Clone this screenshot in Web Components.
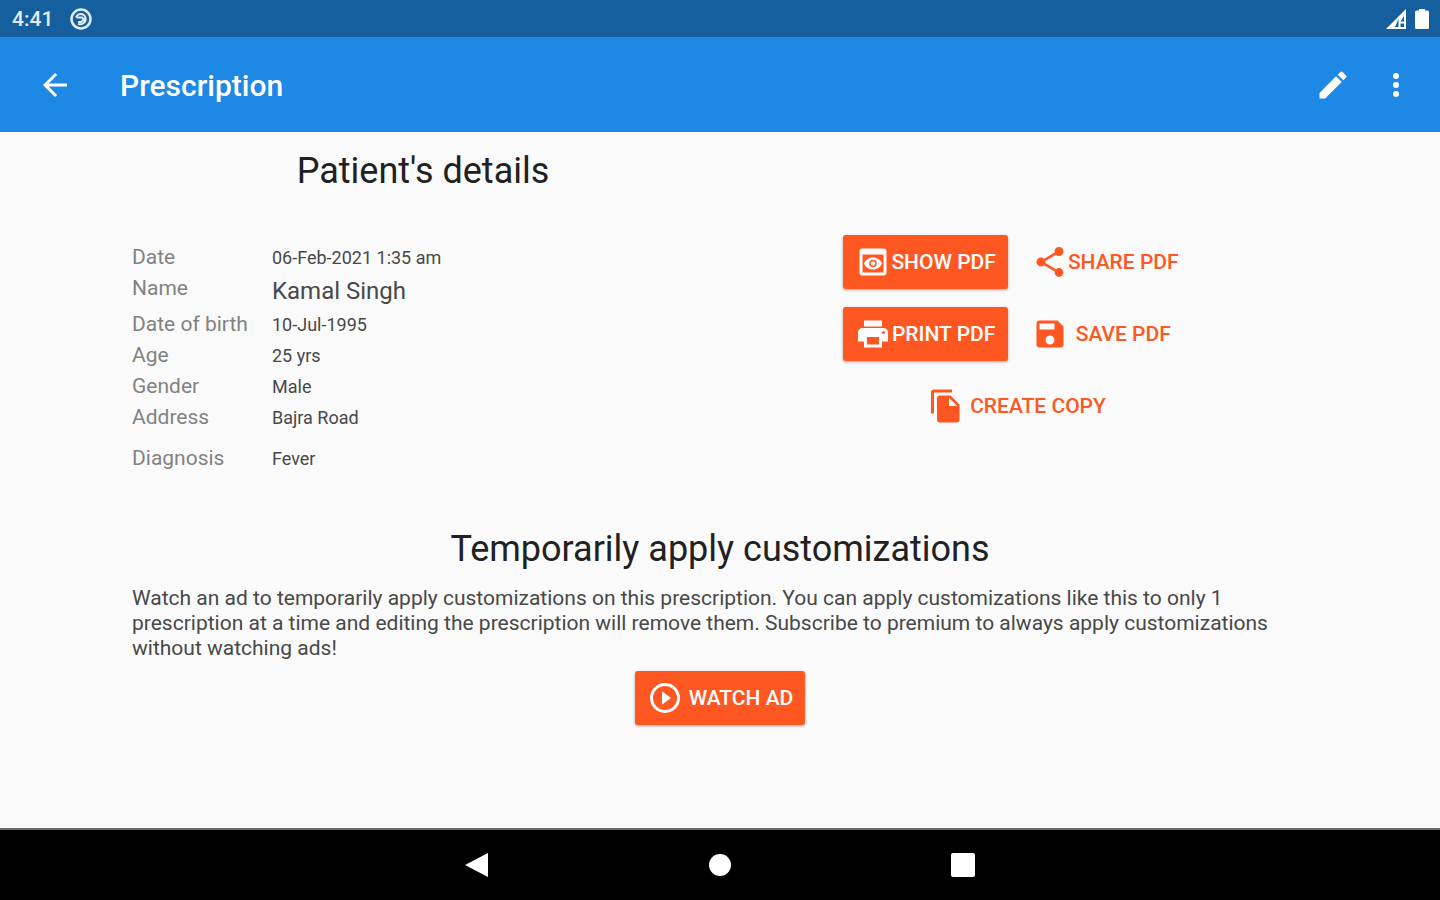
<!DOCTYPE html>
<html lang="en">
<head>
  <meta charset="utf-8" />
  <meta name="viewport" content="width=device-width, initial-scale=1" />
  <title>Prescription</title>
  <style>
    body {
      margin: 0;
      font-family: Roboto, sans-serif;
    }
  </style>
</head>
<body>
  <prescription-screen></prescription-screen>

  <script>
    const ICONS = {
      back: '<path d="M20 11H7.83l5.59-5.59L12 4l-8 8 8 8 1.41-1.41L7.83 13H20z"/>',
      edit: '<path d="M3 17.25V21h3.75L17.81 9.94l-3.75-3.75zM20.71 7.04a1 1 0 0 0 0-1.41l-2.34-2.34a1 1 0 0 0-1.41 0l-1.83 1.83 3.75 3.75z"/>',
      more: '<path d="M12 8a2 2 0 1 0 0-4 2 2 0 0 0 0 4zm0 2a2 2 0 1 0 0 4 2 2 0 0 0 0-4zm0 6a2 2 0 1 0 0 4 2 2 0 0 0 0-4z"/>',
      preview: '<path d="M19 3H5a2 2 0 0 0-2 2v14a2 2 0 0 0 2 2h14a2 2 0 0 0 2-2V5a2 2 0 0 0-2-2zm0 16H5V7h14zm-5.5-6a1.5 1.5 0 1 1-3 0 1.5 1.5 0 0 1 3 0zM12 9c-2.73 0-5.06 1.66-6 4 .94 2.34 3.27 4 6 4s5.06-1.66 6-4c-.94-2.34-3.27-4-6-4zm0 6.5a2.5 2.5 0 1 1 0-5 2.5 2.5 0 0 1 0 5z"/>',
      print: '<path d="M19 8H5a3 3 0 0 0-3 3v6h4v4h12v-4h4v-6a3 3 0 0 0-3-3zm-3 11H8v-5h8zm3-7a1 1 0 1 1 0-2 1 1 0 0 1 0 2zm-1-9H6v4h12z"/>',
      share: '<path d="M18 16.08c-.76 0-1.44.3-1.96.77L8.91 12.7c.05-.23.09-.46.09-.7s-.04-.47-.09-.7l7.05-4.11c.54.5 1.25.81 2.04.81a3 3 0 1 0-3-3c0 .24.04.47.09.7L8.04 9.81A3 3 0 1 0 6 15c.79 0 1.5-.31 2.04-.81l7.12 4.16c-.05.21-.08.43-.08.65a2.92 2.92 0 1 0 2.92-2.92z"/>',
      save: '<path d="M17 3H5a2 2 0 0 0-2 2v14a2 2 0 0 0 2 2h14a2 2 0 0 0 2-2V7zm-5 16a3 3 0 1 1 0-6 3 3 0 0 1 0 6zm3-10H5V5h10z"/>',
      copy: '<path d="M16 1H4a2 2 0 0 0-2 2v14h2V3h12zm-1 4 6 6v10a2 2 0 0 1-2 2H8a2 2 0 0 1-2-2V7a2 2 0 0 1 2-2zm-1 7h5.5L14 6.5z"/>',
      play: '<path d="M10 16.5l6-4.5-6-4.5zM12 2a10 10 0 1 0 0 20 10 10 0 0 0 0-20zm0 18a8 8 0 1 1 0-16 8 8 0 0 1 0 16z"/>',
      badge: '<g fill="none" stroke="currentColor"><circle cx="12" cy="12" r="9.5" stroke-width="2.5"/><path d="M7 10.500c1-3 4-4.500 7-3 3.500 2 3.500 7 0 9-1.500 1-3.500 1-5 .3M8 10.500h5l2 2-3 2.500H9" stroke-width="2"/></g>',
      signal: '<path fill-rule="evenodd" d="M2 22 22 2v20zM11 20h3.500v-8zM16.500 20h3.500v-3.500h-3.500zM16.500 14.500h3.500V9z"/>',
      battery: '<path d="M9 2h6v1.500h2.500a1.500 1.500 0 0 1 1.500 1.500v15.500a1.500 1.500 0 0 1-1.500 1.500h-11A1.500 1.500 0 0 1 5 20.500V5a1.500 1.500 0 0 1 1.500-1.500H9z"/>',
      navBack: '<path d="M0 12 23 0v24z"/>',
      navHome: '<circle cx="12" cy="12" r="11"/>',
      navRecent: '<rect width="24" height="24" rx="2"/>',
    };

    class UiIcon extends HTMLElement {
      constructor() {
        super();
        this.attachShadow({ mode: "open" });
      }

      connectedCallback() {
        this.shadowRoot.innerHTML = /* html */ `
          <style>
            :host {
              display: block;
              flex: none;
              width: var(--icon-size, 36px);
              height: var(--icon-size, 36px);
            }
            svg {
              display: block;
              width: 100%;
              height: 100%;
              fill: currentColor;
            }
          </style>
          <svg viewBox="0 0 24 24" aria-hidden="true">${ICONS[this.getAttribute("name")]}</svg>
        `;
      }
    }

    class StatusBar extends HTMLElement {
      constructor() {
        super();
        this.attachShadow({ mode: "open" });
      }

      connectedCallback() {
        this.shadowRoot.innerHTML = /* html */ `
          <style>
            :host {
              --icon-size: 24px;
              display: flex;
              align-items: center;
              justify-content: space-between;
              height: 37px;
              padding: 0 6px 0 12px;
              background: #165f9f;
              color: #e3ecf5;
              font-size: 21px;
              font-weight: 500;
              line-height: 24px;
            }
            div {
              display: flex;
              align-items: center;
            }
            .left {
              gap: 16px;
            }
            .right {
              gap: 2px;
              color: #fff;
            }
          </style>
          <div class="left">
            <span>4:41</span>
            <ui-icon name="badge"></ui-icon>
          </div>
          <div class="right">
            <ui-icon name="signal"></ui-icon>
            <ui-icon name="battery"></ui-icon>
          </div>
        `;
      }
    }

    class AppBar extends HTMLElement {
      constructor() {
        super();
        this.attachShadow({ mode: "open" });
      }

      connectedCallback() {
        this.shadowRoot.innerHTML = /* html */ `
          <style>
            :host {
              display: flex;
              align-items: center;
              height: 95px;
              padding: 0 13px 0 23px;
              background: #1e88e5;
              color: #fff;
            }
            h1 {
              flex: 1;
              margin: 0;
              padding: 2px 0 0 34px;
              font-size: 30px;
              font-weight: 500;
              line-height: 40px;
            }
            button {
              display: grid;
              place-items: center;
              width: 63px;
              height: 72px;
              padding: 0;
              border: 0;
              background: none;
              color: inherit;
            }
          </style>
          <button type="button" aria-label="Back"><ui-icon name="back"></ui-icon></button>
          <h1><slot></slot></h1>
          <button type="button" aria-label="Edit"><ui-icon name="edit"></ui-icon></button>
          <button type="button" aria-label="More options"><ui-icon name="more"></ui-icon></button>
        `;
      }
    }

    class DetailRow extends HTMLElement {
      constructor() {
        super();
        this.attachShadow({ mode: "open" });
      }

      connectedCallback() {
        this.shadowRoot.innerHTML = /* html */ `
          <style>
            :host {
              display: grid;
              grid-template-columns: 140px 1fr;
              line-height: 31px;
            }
            .label {
              color: #828282;
              font-size: 21px;
            }
            .value {
              color: #484848;
              font-size: 18px;
            }
            :host([large]) .value {
              font-size: 24px;
              line-height: 36px;
            }
            :host([spaced]) {
              margin-top: 10px;
            }
          </style>
          <span class="label">${this.getAttribute("label")}</span>
          <span class="value"><slot></slot></span>
        `;
      }
    }

    class ActionButton extends HTMLElement {
      constructor() {
        super();
        this.attachShadow({ mode: "open" });
      }

      connectedCallback() {
        this.shadowRoot.innerHTML = /* html */ `
          <style>
            :host {
              display: block;
            }
            button {
              display: flex;
              align-items: center;
              width: 100%;
              height: 54px;
              padding: 0 12px;
              border: 0;
              border-radius: 3px;
              background: none;
              color: #ff5722;
              font-family: inherit;
              font-size: 21px;
              font-weight: 500;
              line-height: 28px;
              text-transform: uppercase;
              white-space: nowrap;
            }
            span {
              flex: 1;
              text-align: center;
            }
            :host([filled]) button {
              background: #ff5722;
              color: #fff;
              box-shadow: 0 1px 3px rgba(0, 0, 0, 0.35);
            }
            :host([roomy]) button {
              gap: 6px;
            }
          </style>
          <button type="button">
            <ui-icon name="${this.getAttribute("icon")}"></ui-icon>
            <span><slot></slot></span>
          </button>
        `;
      }
    }

    class SystemNav extends HTMLElement {
      constructor() {
        super();
        this.attachShadow({ mode: "open" });
      }

      connectedCallback() {
        this.shadowRoot.innerHTML = /* html */ `
          <style>
            :host {
              --icon-size: 24px;
              box-sizing: border-box;
              display: flex;
              justify-content: center;
              height: 72px;
              border-top: 2px solid #6b6b6b;
              background: #000;
            }
            button {
              display: grid;
              place-items: center;
              width: 243px;
              padding: 0;
              border: 0;
              background: none;
              color: #fff;
            }
          </style>
          <button type="button" aria-label="Back"><ui-icon name="navBack"></ui-icon></button>
          <button type="button" aria-label="Home"><ui-icon name="navHome"></ui-icon></button>
          <button type="button" aria-label="Recent apps"><ui-icon name="navRecent"></ui-icon></button>
        `;
      }
    }

    class PrescriptionScreen extends HTMLElement {
      constructor() {
        super();
        this.attachShadow({ mode: "open" });
      }

      connectedCallback() {
        this.shadowRoot.innerHTML = /* html */ `
          <style>
            :host {
              display: flex;
              flex-direction: column;
              min-height: 100vh;
              background: #fafafa;
            }
            main {
              flex: 1;
              padding: 17px 132px;
            }
            h2 {
              margin: 0;
              color: #212121;
              font-size: 36px;
              font-weight: 400;
              line-height: 44px;
              text-align: center;
            }
            .top {
              display: grid;
              grid-template-columns: 1fr 1fr;
              gap: 12px;
            }
            .details {
              padding-top: 49px;
            }
            .actions {
              display: grid;
              grid-template-columns: auto auto;
              gap: 18px 12px;
              align-content: start;
              justify-content: center;
              padding-top: 86px;
            }
            .wide {
              grid-column: 1 / -1;
              justify-self: center;
            }
            .customize {
              display: flex;
              flex-direction: column;
              align-items: center;
              padding-top: 53px;
            }
            p {
              margin: 15px 0 10px;
              color: #484848;
              font-size: 21px;
              line-height: 25px;
            }
          </style>
          <status-bar></status-bar>
          <app-bar>Prescription</app-bar>
          <main>
            <div class="top">
              <section>
                <h2>Patient's details</h2>
                <div class="details">
                  <detail-row label="Date">06-Feb-2021 1:35 am</detail-row>
                  <detail-row label="Name" large>Kamal Singh</detail-row>
                  <detail-row label="Date of birth">10-Jul-1995</detail-row>
                  <detail-row label="Age">25 yrs</detail-row>
                  <detail-row label="Gender">Male</detail-row>
                  <detail-row label="Address">Bajra Road</detail-row>
                  <detail-row label="Diagnosis" spaced>Fever</detail-row>
                </div>
              </section>
              <div class="actions">
                <action-button icon="preview" filled>Show PDF</action-button>
                <action-button icon="share">Share PDF</action-button>
                <action-button icon="print" filled>Print PDF</action-button>
                <action-button icon="save">Save PDF</action-button>
                <action-button class="wide" icon="copy" roomy>Create copy</action-button>
              </div>
            </div>
            <section class="customize">
              <h2>Temporarily apply customizations</h2>
              <p>
                Watch an ad to temporarily apply customizations on this prescription. You can apply
                customizations like this to only 1 prescription at a time and editing the prescription
                will remove them. Subscribe to premium to always apply customizations without watching
                ads!
              </p>
              <action-button icon="play" filled roomy>Watch ad</action-button>
            </section>
          </main>
          <system-nav></system-nav>
        `;
      }
    }

    customElements.define("ui-icon", UiIcon);
    customElements.define("status-bar", StatusBar);
    customElements.define("app-bar", AppBar);
    customElements.define("detail-row", DetailRow);
    customElements.define("action-button", ActionButton);
    customElements.define("system-nav", SystemNav);
    customElements.define("prescription-screen", PrescriptionScreen);
  </script>
</body>
</html>
